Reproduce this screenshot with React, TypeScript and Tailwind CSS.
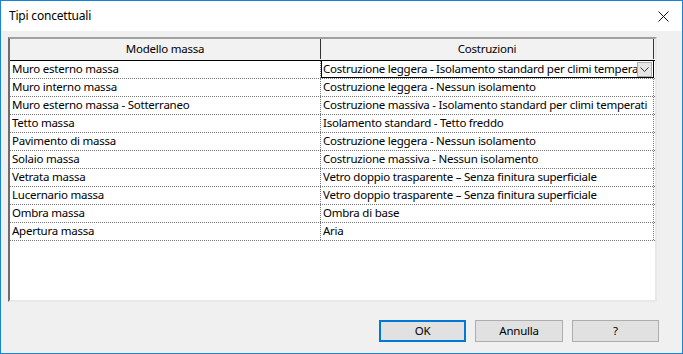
const ROWS = [
  ["Muro esterno massa", "Costruzione leggera - Isolamento standard per climi temperati"],
  ["Muro interno massa", "Costruzione leggera - Nessun isolamento"],
  ["Muro esterno massa - Sotterraneo", "Costruzione massiva - Isolamento standard per climi temperati"],
  ["Tetto massa", "Isolamento standard - Tetto freddo"],
  ["Pavimento di massa", "Costruzione leggera - Nessun isolamento"],
  ["Solaio massa", "Costruzione massiva - Nessun isolamento"],
  ["Vetrata massa", "Vetro doppio trasparente – Senza finitura superficiale"],
  ["Lucernario massa", "Vetro doppio trasparente – Senza finitura superficiale"],
  ["Ombra massa", "Ombra di base"],
  ["Apertura massa", "Aria"],
];

function Chevron() {
  return (
    <svg width="9" height="5" viewBox="0 0 9 5" fill="none">
      <path d="M0.5 0.5 L4.5 4.5 L8.5 0.5" stroke="#333" strokeWidth="1" />
    </svg>
  );
}

export default function App() {
  return (
    <div
      className="flex h-[354px] w-[683px] flex-col border border-[#1883d7] bg-[#f0f0f0] text-[11.5px] tracking-[-0.24px] text-black"
      style={{ fontFamily: '"Noto Sans", "Open Sans", sans-serif' }}
    >
      {/* title bar */}
      <div className="flex h-[30px] items-center justify-between bg-white pl-[8px] pr-[13px]">
        <span className="text-[12px] tracking-[-0.2px]">Tipi concettuali</span>
        <svg width="11" height="11" viewBox="0 0 11 11">
          <path d="M0.5 0.5 L10.5 10.5 M10.5 0.5 L0.5 10.5" stroke="#111" strokeWidth="1" />
        </svg>
      </div>

      {/* grid */}
      <div className="ml-[7px] mt-[6px] flex h-[265px] w-[649px] flex-col border-2 border-l-[#6d6d6d] border-t-[#a0a0a0] border-r-[#e8e8e8] border-b-[#e8e8e8] bg-white">
        <div className="flex h-[22px] border-b border-black bg-[#f2f2f2] pb-px">
          <div className="flex w-[311px] items-center justify-center border-r border-[#333]">Modello massa</div>
          <div className="flex w-[333px] items-center justify-center border-r border-[#333]">Costruzioni</div>
        </div>
        {ROWS.map(([a, b], i) => (
          <div key={a} className="flex h-[18px] border-b border-dotted border-[#777]">
            <div className="flex w-[311px] items-center overflow-hidden whitespace-nowrap border-r border-dotted border-[#777] pb-px pl-[2px]">
              {a}
            </div>
            {i === 0 ? (
              <div className="-mt-px flex h-[18px] w-[333px] items-center border border-black">
                <span className="flex-1 overflow-hidden whitespace-nowrap pb-px pl-[1px]">{b}</span>
                <span className="mr-px flex h-[15px] w-[15px] items-center justify-center border border-[#adadad] bg-[#e5e5e5]">
                  <Chevron />
                </span>
              </div>
            ) : (
              <div className="flex w-[333px] items-center overflow-hidden whitespace-nowrap border-r border-dotted border-[#777] pb-px pl-[2px]">
                {b}
              </div>
            )}
          </div>
        ))}
      </div>

      {/* buttons */}
      <div className="mr-[23px] mt-[18px] flex justify-end gap-[9px]">
        <button className="flex h-[22px] w-[87px] items-center justify-center border-2 border-[#0078d7] bg-[#e1e1e1]">OK</button>
        <button className="flex h-[22px] w-[88px] items-center justify-center border border-[#adadad] bg-[#e1e1e1]">Annulla</button>
        <button className="flex h-[22px] w-[87px] items-center justify-center border border-[#adadad] bg-[#e1e1e1]">?</button>
      </div>
    </div>
  );
}
